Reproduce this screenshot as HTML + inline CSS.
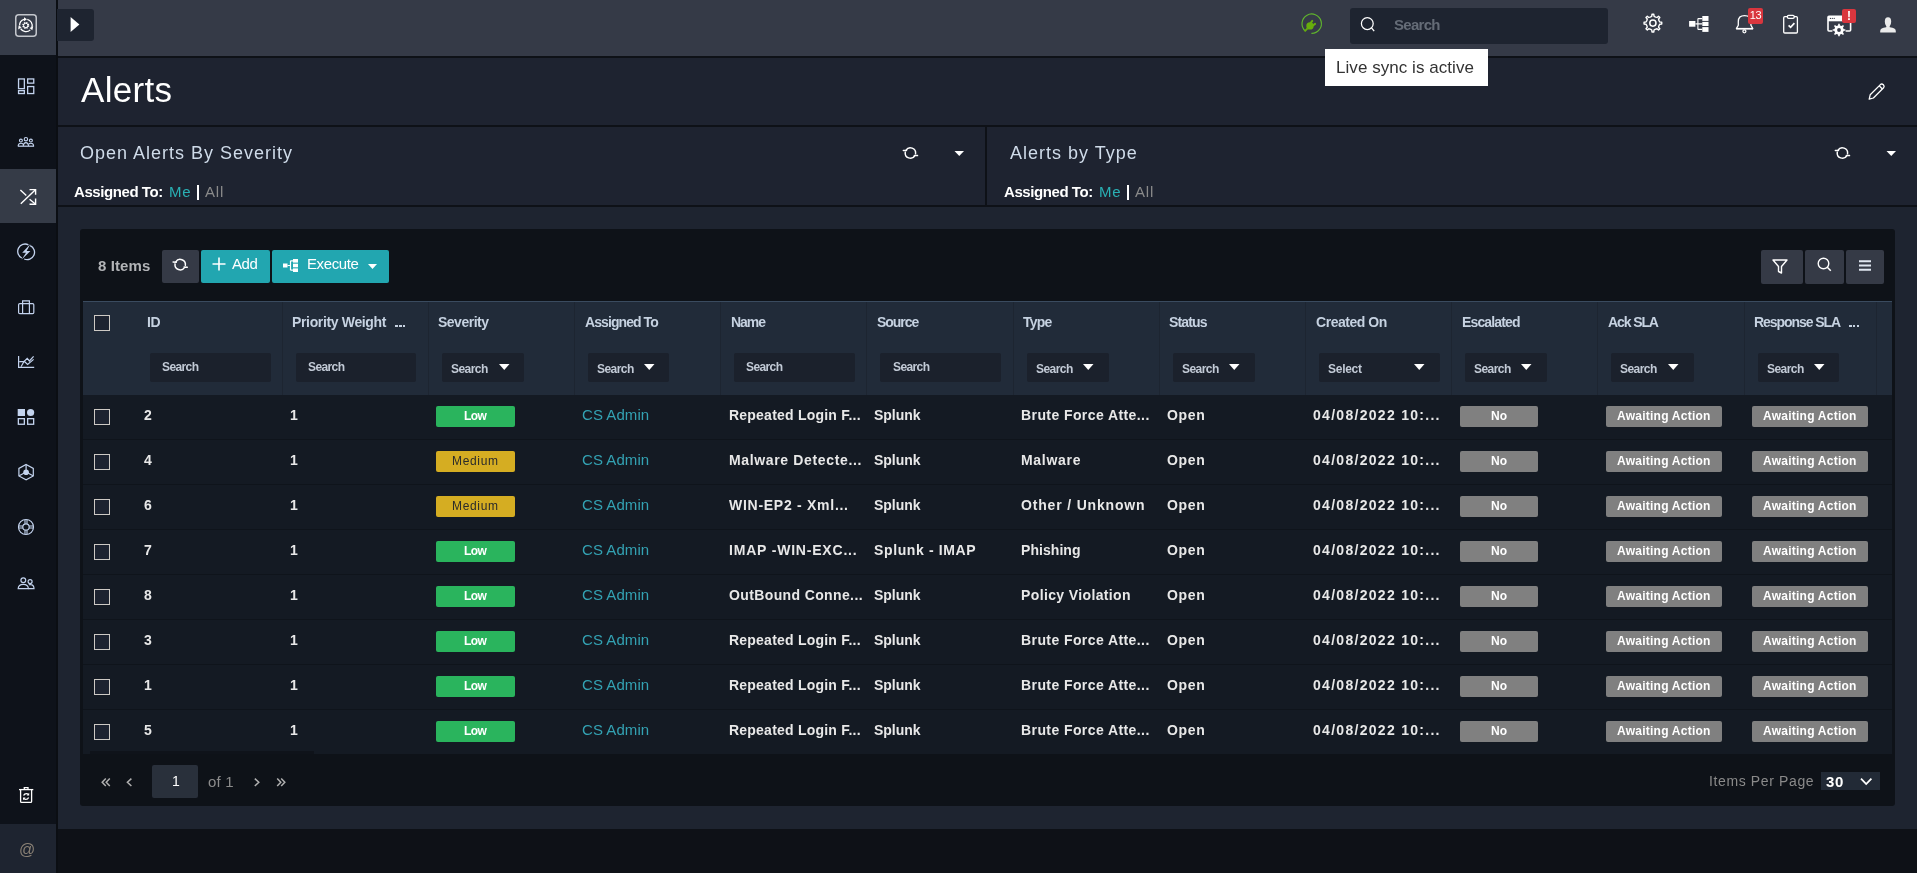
<!DOCTYPE html><html><head><meta charset='utf-8'><style>
*{box-sizing:border-box;margin:0;padding:0}
html,body{width:1917px;height:873px;overflow:hidden;background:#0e1117;font-family:"Liberation Sans", sans-serif;}
.a{position:absolute}
.t{position:absolute;white-space:nowrap;line-height:1;will-change:transform}
svg{position:absolute;overflow:visible}
</style></head><body>
<div class='a' style='left:0;top:0;width:56px;height:873px;background:#0e121a'></div>
<div class='a' style='left:0;top:0;width:56px;height:55px;background:#363c49'></div>
<div class='a' style='left:0;top:169px;width:56px;height:54px;background:#353b47'></div>
<div class='a' style='left:0;top:824px;width:56px;height:49px;background:#1e2430'></div>
<div class='a' style='left:56px;top:0;width:2px;height:873px;background:#0b0e13'></div>
<div class='t' style='left:18.90px;top:842px;font-size:16px;font-weight:400;color:#8a8175;letter-spacing:0.000px;'>@</div>
<div class='a' style='left:58px;top:0;width:1859px;height:56px;background:#353a47'></div>
<div class='a' style='left:58px;top:56px;width:1859px;height:2px;background:#0e1117'></div>
<div class='a' style='left:57px;top:9px;width:37px;height:32px;background:#1e2430;border-radius:0 3px 3px 0'></div>
<div class='a' style='left:1350px;top:8px;width:258px;height:36px;background:#1e2430;border-radius:3px'></div>
<div class='t' style='left:1394.00px;top:17px;font-size:15px;font-weight:700;color:#656c77;letter-spacing:-0.720px;'>Search</div>
<div class='a' style='left:58px;top:58px;width:1859px;height:67px;background:#1e2330'></div>
<div class='t' style='left:81px;top:72px;font-size:35px;color:#fff;letter-spacing:0.3px'>Alerts</div>
<div class='a' style='left:58px;top:125px;width:1859px;height:2px;background:#0e1117'></div>
<div class='a' style='left:58px;top:127px;width:1859px;height:78px;background:#1e2330'></div>
<div class='a' style='left:985px;top:127px;width:2px;height:78px;background:#0e1117'></div>
<div class='a' style='left:58px;top:205px;width:1859px;height:2px;background:#0e1117'></div>
<div class='t' style='left:80px;top:144px;font-size:18px;color:#cfdbe9;letter-spacing:1px'>Open Alerts By Severity</div>
<div class='t' style='left:74.30px;top:184px;font-size:15px;font-weight:700;color:#fff;letter-spacing:-0.425px;'>Assigned To:</div>
<div class='t' style='left:168.90px;top:184px;font-size:15px;font-weight:400;color:#2ab0b4;letter-spacing:0.825px;font-weight:400'>Me</div>
<div class='a' style='left:197.3px;top:185px;width:1.7px;height:15px;background:#fff'></div>
<div class='t' style='left:205.00px;top:184px;font-size:15px;font-weight:400;color:#8a8a8a;letter-spacing:0.787px;'>All</div>
<div class='t' style='left:1010px;top:144px;font-size:18px;color:#cfdbe9;letter-spacing:1px'>Alerts by Type</div>
<div class='t' style='left:1004.30px;top:184px;font-size:15px;font-weight:700;color:#fff;letter-spacing:-0.425px;'>Assigned To:</div>
<div class='t' style='left:1098.90px;top:184px;font-size:15px;font-weight:400;color:#2ab0b4;letter-spacing:0.825px;font-weight:400'>Me</div>
<div class='a' style='left:1127.3px;top:185px;width:1.7px;height:15px;background:#fff'></div>
<div class='t' style='left:1135.00px;top:184px;font-size:15px;font-weight:400;color:#8a8a8a;letter-spacing:0.787px;'>All</div>
<div class='a' style='left:58px;top:207px;width:1859px;height:622px;background:#1e2430'></div>
<div class='a' style='left:80px;top:229px;width:1815px;height:577px;background:#0e1218;border-radius:3px'></div>
<div class='t' style='left:97.50px;top:258px;font-size:15px;font-weight:700;color:#b2b4b7;letter-spacing:0.108px;'>8 Items</div>
<div class='a' style='left:162px;top:250px;width:37px;height:33px;background:#353a46;border-radius:2px'></div>
<div class='a' style='left:201px;top:250px;width:69px;height:33px;background:#22a6b0;border-radius:2px'></div>
<svg style='left:212px;top:257px' width='14' height='14' viewBox='0 0 14 14'><path d='M7 0.5 V13.5 M0.5 7 H13.5' stroke='#fff' stroke-width='1.6'/></svg>
<div class='t' style='left:232.30px;top:256px;font-size:15px;font-weight:400;color:#fff;letter-spacing:-0.425px;'>Add</div>
<div class='a' style='left:272px;top:250px;width:117px;height:33px;background:#22a6b0;border-radius:2px'></div>
<svg style='left:283px;top:259px' width='16' height='13' viewBox='0 0 16 13'><g fill='#fff'>
<rect x='0' y='4.5' width='4.5' height='4'/><rect x='10' y='0' width='5' height='3.6'/><rect x='10' y='4.7' width='5' height='3.6'/><rect x='10' y='9.4' width='5' height='3.6'/></g>
<path d='M4.5 6.5 H7.5 M7.5 1.8 V11.2 M7.5 1.8 H10 M7.5 11.2 H10' stroke='#fff' stroke-width='1.2' fill='none'/></svg>
<div class='t' style='left:306.90px;top:256px;font-size:15px;font-weight:400;color:#fff;letter-spacing:-0.392px;'>Execute</div>
<svg style='left:368px;top:264px' width='9' height='5' viewBox='0 0 9 5'><path d='M0 0 H9 L4.5 5Z' fill='#fff'/></svg>
<div class='a' style='left:1761px;top:250px;width:42px;height:34px;background:#353a46;border-radius:2px'></div>
<div class='a' style='left:1805px;top:250px;width:39px;height:34px;background:#353a46;border-radius:2px'></div>
<div class='a' style='left:1846px;top:250px;width:38px;height:34px;background:#353a46;border-radius:2px'></div>
<svg style='left:1772px;top:259px' width='16' height='15' viewBox='0 0 16 15'><path d='M1 1 H15 L9.5 7.5 V14 L6.5 12.5 V7.5Z' fill='none' stroke='#fff' stroke-width='1.4' stroke-linejoin='round'/></svg>
<svg style='left:1817px;top:257px' width='15' height='15' viewBox='0 0 15 15'><circle cx='6.5' cy='6.5' r='5.3' fill='none' stroke='#fff' stroke-width='1.4'/><path d='M10.3 10.3 L13.8 13.8' stroke='#fff' stroke-width='1.5'/></svg>
<svg style='left:1859px;top:260px' width='12' height='11' viewBox='0 0 12 11'><path d='M0 1.2 H12 M0 5.5 H12 M0 9.8 H12' stroke='#dfe6f0' stroke-width='2'/></svg>
<div class='a' style='left:83px;top:301px;width:1809px;height:94px;background:#212b39;border-top:1px solid #3a4b5f'></div>
<div class='a' style='left:282px;top:302px;width:1px;height:93px;background:#1d2531'></div>
<div class='a' style='left:428px;top:302px;width:1px;height:93px;background:#1d2531'></div>
<div class='a' style='left:574px;top:302px;width:1px;height:93px;background:#1d2531'></div>
<div class='a' style='left:720px;top:302px;width:1px;height:93px;background:#1d2531'></div>
<div class='a' style='left:866px;top:302px;width:1px;height:93px;background:#1d2531'></div>
<div class='a' style='left:1013px;top:302px;width:1px;height:93px;background:#1d2531'></div>
<div class='a' style='left:1159px;top:302px;width:1px;height:93px;background:#1d2531'></div>
<div class='a' style='left:1305px;top:302px;width:1px;height:93px;background:#1d2531'></div>
<div class='a' style='left:1451px;top:302px;width:1px;height:93px;background:#1d2531'></div>
<div class='a' style='left:1597px;top:302px;width:1px;height:93px;background:#1d2531'></div>
<div class='a' style='left:1744px;top:302px;width:1px;height:93px;background:#1d2531'></div>
<div class='a' style='left:1876px;top:302px;width:1px;height:93px;background:#1d2531'></div>
<div class='a' style='left:94px;top:315px;width:16px;height:16px;border:1.5px solid #cdc9c4;background:#1d2330'></div>
<div class='t' style='left:147.20px;top:315px;font-size:14px;font-weight:700;color:#c6d2e1;letter-spacing:-0.500px;'>ID</div>
<div class='a' style='left:150.0px;top:353px;width:120.5px;height:29px;background:#1b212c;border-radius:2px'></div>
<div class='t' style='left:162.20px;top:361px;font-size:12px;font-weight:700;color:#c2cad6;letter-spacing:-0.600px;'>Search</div>
<div class='t' style='left:292.20px;top:315px;font-size:14px;font-weight:700;color:#c6d2e1;letter-spacing:-0.348px;'>Priority Weight</div>
<div class='a' style='left:295.5px;top:353px;width:120.5px;height:29px;background:#1b212c;border-radius:2px'></div>
<div class='t' style='left:307.70px;top:361px;font-size:12px;font-weight:700;color:#c2cad6;letter-spacing:-0.600px;'>Search</div>
<div class='t' style='left:438.40px;top:315px;font-size:14px;font-weight:700;color:#c6d2e1;letter-spacing:-0.500px;'>Severity</div>
<div class='a' style='left:441.7px;top:353px;width:82.7px;height:29px;background:#1b212c;border-radius:2px'></div>
<div class='t' style='left:450.80px;top:363px;font-size:12px;font-weight:700;color:#c2cad6;letter-spacing:-0.560px;'>Search</div>
<svg style='left:498.9px;top:364px' width='10.5' height='6' viewBox='0 0 10.5 6'><path d='M0 0 H10.5 L5.25 6Z' fill='#fff'/></svg>
<div class='t' style='left:584.60px;top:315px;font-size:14px;font-weight:700;color:#c6d2e1;letter-spacing:-0.920px;'>Assigned To</div>
<div class='a' style='left:587.9px;top:353px;width:81.3px;height:29px;background:#1b212c;border-radius:2px'></div>
<div class='t' style='left:597.00px;top:363px;font-size:12px;font-weight:700;color:#c2cad6;letter-spacing:-0.560px;'>Search</div>
<svg style='left:643.7px;top:364px' width='10.5' height='6' viewBox='0 0 10.5 6'><path d='M0 0 H10.5 L5.25 6Z' fill='#fff'/></svg>
<div class='t' style='left:730.80px;top:315px;font-size:14px;font-weight:700;color:#c6d2e1;letter-spacing:-1.042px;'>Name</div>
<div class='a' style='left:734.1px;top:353px;width:120.5px;height:29px;background:#1b212c;border-radius:2px'></div>
<div class='t' style='left:746.30px;top:361px;font-size:12px;font-weight:700;color:#c2cad6;letter-spacing:-0.600px;'>Search</div>
<div class='t' style='left:877.00px;top:315px;font-size:14px;font-weight:700;color:#c6d2e1;letter-spacing:-1.060px;'>Source</div>
<div class='a' style='left:880.3px;top:353px;width:120.5px;height:29px;background:#1b212c;border-radius:2px'></div>
<div class='t' style='left:892.50px;top:361px;font-size:12px;font-weight:700;color:#c2cad6;letter-spacing:-0.600px;'>Search</div>
<div class='t' style='left:1023.20px;top:315px;font-size:14px;font-weight:700;color:#c6d2e1;letter-spacing:-0.742px;'>Type</div>
<div class='a' style='left:1026.5px;top:353px;width:82px;height:29px;background:#1b212c;border-radius:2px'></div>
<div class='t' style='left:1035.60px;top:363px;font-size:12px;font-weight:700;color:#c2cad6;letter-spacing:-0.560px;'>Search</div>
<svg style='left:1083.0px;top:364px' width='10.5' height='6' viewBox='0 0 10.5 6'><path d='M0 0 H10.5 L5.25 6Z' fill='#fff'/></svg>
<div class='t' style='left:1169.40px;top:315px;font-size:14px;font-weight:700;color:#c6d2e1;letter-spacing:-0.850px;'>Status</div>
<div class='a' style='left:1172.7px;top:353px;width:82px;height:29px;background:#1b212c;border-radius:2px'></div>
<div class='t' style='left:1181.80px;top:363px;font-size:12px;font-weight:700;color:#c2cad6;letter-spacing:-0.560px;'>Search</div>
<svg style='left:1229.2px;top:364px' width='10.5' height='6' viewBox='0 0 10.5 6'><path d='M0 0 H10.5 L5.25 6Z' fill='#fff'/></svg>
<div class='t' style='left:1315.60px;top:315px;font-size:14px;font-weight:700;color:#c6d2e1;letter-spacing:-0.456px;'>Created On</div>
<div class='a' style='left:1318.9px;top:353px;width:120.7px;height:29px;background:#1b212c;border-radius:2px'></div>
<div class='t' style='left:1328.00px;top:363px;font-size:12px;font-weight:700;color:#c2cad6;letter-spacing:-0.275px;'>Select</div>
<svg style='left:1414.1px;top:364px' width='10.5' height='6' viewBox='0 0 10.5 6'><path d='M0 0 H10.5 L5.25 6Z' fill='#fff'/></svg>
<div class='t' style='left:1461.80px;top:315px;font-size:14px;font-weight:700;color:#c6d2e1;letter-spacing:-0.847px;'>Escalated</div>
<div class='a' style='left:1465.1px;top:353px;width:81.8px;height:29px;background:#1b212c;border-radius:2px'></div>
<div class='t' style='left:1474.20px;top:363px;font-size:12px;font-weight:700;color:#c2cad6;letter-spacing:-0.560px;'>Search</div>
<svg style='left:1521.4px;top:364px' width='10.5' height='6' viewBox='0 0 10.5 6'><path d='M0 0 H10.5 L5.25 6Z' fill='#fff'/></svg>
<div class='t' style='left:1608.00px;top:315px;font-size:14px;font-weight:700;color:#c6d2e1;letter-spacing:-1.104px;'>Ack SLA</div>
<div class='a' style='left:1611.3px;top:353px;width:82.4px;height:29px;background:#1b212c;border-radius:2px'></div>
<div class='t' style='left:1620.40px;top:363px;font-size:12px;font-weight:700;color:#c2cad6;letter-spacing:-0.560px;'>Search</div>
<svg style='left:1668.2px;top:364px' width='10.5' height='6' viewBox='0 0 10.5 6'><path d='M0 0 H10.5 L5.25 6Z' fill='#fff'/></svg>
<div class='t' style='left:1754.20px;top:315px;font-size:14px;font-weight:700;color:#c6d2e1;letter-spacing:-1.068px;'>Response SLA</div>
<div class='a' style='left:1757.5px;top:353px;width:81.6px;height:29px;background:#1b212c;border-radius:2px'></div>
<div class='t' style='left:1766.60px;top:363px;font-size:12px;font-weight:700;color:#c2cad6;letter-spacing:-0.560px;'>Search</div>
<svg style='left:1813.6px;top:364px' width='10.5' height='6' viewBox='0 0 10.5 6'><path d='M0 0 H10.5 L5.25 6Z' fill='#fff'/></svg>
<div class='a' style='left:395.4px;top:324.5px;width:2.6px;height:2.6px;background:#c6d2e1'></div>
<div class='a' style='left:399.0px;top:324.5px;width:2.6px;height:2.6px;background:#c6d2e1'></div>
<div class='a' style='left:402.6px;top:324.5px;width:2.6px;height:2.6px;background:#c6d2e1'></div>
<div class='a' style='left:1849.3px;top:324.5px;width:2.6px;height:2.6px;background:#c6d2e1'></div>
<div class='a' style='left:1852.9px;top:324.5px;width:2.6px;height:2.6px;background:#c6d2e1'></div>
<div class='a' style='left:1856.5px;top:324.5px;width:2.6px;height:2.6px;background:#c6d2e1'></div>
<div class='a' style='left:83px;top:395px;width:1809px;height:44px;background:#141a23'></div>
<div class='a' style='left:83px;top:439px;width:1809px;height:1px;background:#0f141b'></div>
<div class='a' style='left:94px;top:409px;width:16px;height:16px;border:1.5px solid #cdc9c4;background:#1d2330'></div>
<div class='t' style='left:144.40px;top:408px;font-size:14px;font-weight:700;color:#e8e8e8;letter-spacing:0.000px;'>2</div>
<div class='t' style='left:290.20px;top:408px;font-size:14px;font-weight:700;color:#e8e8e8;letter-spacing:0.000px;'>1</div>
<div class='a' style='left:435.7px;top:406px;width:79.3px;height:21px;background:#2ab45d;border-radius:2px'></div>
<div class='t' style='left:463.60px;top:410px;font-size:12px;font-weight:700;color:#fff;letter-spacing:-0.550px;'>Low</div>
<div class='t' style='left:582.00px;top:407px;font-size:15px;font-weight:400;color:#33a2b3;letter-spacing:0.064px;'>CS Admin</div>
<div class='t' style='left:728.60px;top:408px;font-size:14px;font-weight:700;color:#e8e8e8;letter-spacing:0.221px;'>Repeated Login F...</div>
<div class='t' style='left:874.40px;top:408px;font-size:14px;font-weight:700;color:#e8e8e8;letter-spacing:-0.010px;'>Splunk</div>
<div class='t' style='left:1020.80px;top:408px;font-size:14px;font-weight:700;color:#e8e8e8;letter-spacing:0.413px;'>Brute Force Atte...</div>
<div class='t' style='left:1166.70px;top:408px;font-size:14px;font-weight:700;color:#e8e8e8;letter-spacing:0.683px;'>Open</div>
<div class='t' style='left:1312.90px;top:408px;font-size:14px;font-weight:700;color:#e8e8e8;letter-spacing:1.289px;'>04/08/2022 10:...</div>
<div class='a' style='left:1460px;top:406px;width:78px;height:21px;background:#808080;border-radius:2px'></div>
<div class='t' style='left:1460px;top:410px;width:78px;text-align:center;font-size:12px;color:#fff;font-weight:700'>No</div>
<div class='a' style='left:1605.8px;top:406px;width:116.5px;height:21px;background:#808080;border-radius:2px'></div>
<div class='t' style='left:1617.00px;top:410px;font-size:12px;font-weight:700;color:#fff;letter-spacing:0.243px;'>Awaiting Action</div>
<div class='a' style='left:1751.9px;top:406px;width:116.5px;height:21px;background:#808080;border-radius:2px'></div>
<div class='t' style='left:1763.10px;top:410px;font-size:12px;font-weight:700;color:#fff;letter-spacing:0.243px;'>Awaiting Action</div>
<div class='a' style='left:83px;top:440px;width:1809px;height:44px;background:#141a23'></div>
<div class='a' style='left:83px;top:484px;width:1809px;height:1px;background:#0f141b'></div>
<div class='a' style='left:94px;top:454px;width:16px;height:16px;border:1.5px solid #cdc9c4;background:#1d2330'></div>
<div class='t' style='left:144.40px;top:453px;font-size:14px;font-weight:700;color:#e8e8e8;letter-spacing:0.000px;'>4</div>
<div class='t' style='left:290.20px;top:453px;font-size:14px;font-weight:700;color:#e8e8e8;letter-spacing:0.000px;'>1</div>
<div class='a' style='left:435.7px;top:451px;width:79.3px;height:21px;background:#d5ad22;border-radius:2px'></div>
<div class='t' style='left:451.90px;top:455px;font-size:12px;font-weight:400;color:#2b2b2b;letter-spacing:0.675px;'>Medium</div>
<div class='t' style='left:582.00px;top:452px;font-size:15px;font-weight:400;color:#33a2b3;letter-spacing:0.064px;'>CS Admin</div>
<div class='t' style='left:728.60px;top:453px;font-size:14px;font-weight:700;color:#e8e8e8;letter-spacing:0.649px;'>Malware Detecte...</div>
<div class='t' style='left:874.40px;top:453px;font-size:14px;font-weight:700;color:#e8e8e8;letter-spacing:-0.010px;'>Splunk</div>
<div class='t' style='left:1020.80px;top:453px;font-size:14px;font-weight:700;color:#e8e8e8;letter-spacing:0.708px;'>Malware</div>
<div class='t' style='left:1166.70px;top:453px;font-size:14px;font-weight:700;color:#e8e8e8;letter-spacing:0.683px;'>Open</div>
<div class='t' style='left:1312.90px;top:453px;font-size:14px;font-weight:700;color:#e8e8e8;letter-spacing:1.289px;'>04/08/2022 10:...</div>
<div class='a' style='left:1460px;top:451px;width:78px;height:21px;background:#808080;border-radius:2px'></div>
<div class='t' style='left:1460px;top:455px;width:78px;text-align:center;font-size:12px;color:#fff;font-weight:700'>No</div>
<div class='a' style='left:1605.8px;top:451px;width:116.5px;height:21px;background:#808080;border-radius:2px'></div>
<div class='t' style='left:1617.00px;top:455px;font-size:12px;font-weight:700;color:#fff;letter-spacing:0.243px;'>Awaiting Action</div>
<div class='a' style='left:1751.9px;top:451px;width:116.5px;height:21px;background:#808080;border-radius:2px'></div>
<div class='t' style='left:1763.10px;top:455px;font-size:12px;font-weight:700;color:#fff;letter-spacing:0.243px;'>Awaiting Action</div>
<div class='a' style='left:83px;top:485px;width:1809px;height:44px;background:#141a23'></div>
<div class='a' style='left:83px;top:529px;width:1809px;height:1px;background:#0f141b'></div>
<div class='a' style='left:94px;top:499px;width:16px;height:16px;border:1.5px solid #cdc9c4;background:#1d2330'></div>
<div class='t' style='left:144.40px;top:498px;font-size:14px;font-weight:700;color:#e8e8e8;letter-spacing:0.000px;'>6</div>
<div class='t' style='left:290.20px;top:498px;font-size:14px;font-weight:700;color:#e8e8e8;letter-spacing:0.000px;'>1</div>
<div class='a' style='left:435.7px;top:496px;width:79.3px;height:21px;background:#d5ad22;border-radius:2px'></div>
<div class='t' style='left:451.90px;top:500px;font-size:12px;font-weight:400;color:#2b2b2b;letter-spacing:0.675px;'>Medium</div>
<div class='t' style='left:582.00px;top:497px;font-size:15px;font-weight:400;color:#33a2b3;letter-spacing:0.064px;'>CS Admin</div>
<div class='t' style='left:728.60px;top:498px;font-size:14px;font-weight:700;color:#e8e8e8;letter-spacing:0.725px;'>WIN-EP2 - Xml...</div>
<div class='t' style='left:874.40px;top:498px;font-size:14px;font-weight:700;color:#e8e8e8;letter-spacing:-0.010px;'>Splunk</div>
<div class='t' style='left:1020.80px;top:498px;font-size:14px;font-weight:700;color:#e8e8e8;letter-spacing:0.829px;'>Other / Unknown</div>
<div class='t' style='left:1166.70px;top:498px;font-size:14px;font-weight:700;color:#e8e8e8;letter-spacing:0.683px;'>Open</div>
<div class='t' style='left:1312.90px;top:498px;font-size:14px;font-weight:700;color:#e8e8e8;letter-spacing:1.289px;'>04/08/2022 10:...</div>
<div class='a' style='left:1460px;top:496px;width:78px;height:21px;background:#808080;border-radius:2px'></div>
<div class='t' style='left:1460px;top:500px;width:78px;text-align:center;font-size:12px;color:#fff;font-weight:700'>No</div>
<div class='a' style='left:1605.8px;top:496px;width:116.5px;height:21px;background:#808080;border-radius:2px'></div>
<div class='t' style='left:1617.00px;top:500px;font-size:12px;font-weight:700;color:#fff;letter-spacing:0.243px;'>Awaiting Action</div>
<div class='a' style='left:1751.9px;top:496px;width:116.5px;height:21px;background:#808080;border-radius:2px'></div>
<div class='t' style='left:1763.10px;top:500px;font-size:12px;font-weight:700;color:#fff;letter-spacing:0.243px;'>Awaiting Action</div>
<div class='a' style='left:83px;top:530px;width:1809px;height:44px;background:#141a23'></div>
<div class='a' style='left:83px;top:574px;width:1809px;height:1px;background:#0f141b'></div>
<div class='a' style='left:94px;top:544px;width:16px;height:16px;border:1.5px solid #cdc9c4;background:#1d2330'></div>
<div class='t' style='left:144.40px;top:543px;font-size:14px;font-weight:700;color:#e8e8e8;letter-spacing:0.000px;'>7</div>
<div class='t' style='left:290.20px;top:543px;font-size:14px;font-weight:700;color:#e8e8e8;letter-spacing:0.000px;'>1</div>
<div class='a' style='left:435.7px;top:541px;width:79.3px;height:21px;background:#2ab45d;border-radius:2px'></div>
<div class='t' style='left:463.60px;top:545px;font-size:12px;font-weight:700;color:#fff;letter-spacing:-0.550px;'>Low</div>
<div class='t' style='left:582.00px;top:542px;font-size:15px;font-weight:400;color:#33a2b3;letter-spacing:0.064px;'>CS Admin</div>
<div class='t' style='left:728.60px;top:543px;font-size:14px;font-weight:700;color:#e8e8e8;letter-spacing:0.805px;'>IMAP -WIN-EXC...</div>
<div class='t' style='left:874.40px;top:543px;font-size:14px;font-weight:700;color:#e8e8e8;letter-spacing:0.631px;'>Splunk - IMAP</div>
<div class='t' style='left:1020.80px;top:543px;font-size:14px;font-weight:700;color:#e8e8e8;letter-spacing:0.054px;'>Phishing</div>
<div class='t' style='left:1166.70px;top:543px;font-size:14px;font-weight:700;color:#e8e8e8;letter-spacing:0.683px;'>Open</div>
<div class='t' style='left:1312.90px;top:543px;font-size:14px;font-weight:700;color:#e8e8e8;letter-spacing:1.289px;'>04/08/2022 10:...</div>
<div class='a' style='left:1460px;top:541px;width:78px;height:21px;background:#808080;border-radius:2px'></div>
<div class='t' style='left:1460px;top:545px;width:78px;text-align:center;font-size:12px;color:#fff;font-weight:700'>No</div>
<div class='a' style='left:1605.8px;top:541px;width:116.5px;height:21px;background:#808080;border-radius:2px'></div>
<div class='t' style='left:1617.00px;top:545px;font-size:12px;font-weight:700;color:#fff;letter-spacing:0.243px;'>Awaiting Action</div>
<div class='a' style='left:1751.9px;top:541px;width:116.5px;height:21px;background:#808080;border-radius:2px'></div>
<div class='t' style='left:1763.10px;top:545px;font-size:12px;font-weight:700;color:#fff;letter-spacing:0.243px;'>Awaiting Action</div>
<div class='a' style='left:83px;top:575px;width:1809px;height:44px;background:#141a23'></div>
<div class='a' style='left:83px;top:619px;width:1809px;height:1px;background:#0f141b'></div>
<div class='a' style='left:94px;top:589px;width:16px;height:16px;border:1.5px solid #cdc9c4;background:#1d2330'></div>
<div class='t' style='left:144.40px;top:588px;font-size:14px;font-weight:700;color:#e8e8e8;letter-spacing:0.000px;'>8</div>
<div class='t' style='left:290.20px;top:588px;font-size:14px;font-weight:700;color:#e8e8e8;letter-spacing:0.000px;'>1</div>
<div class='a' style='left:435.7px;top:586px;width:79.3px;height:21px;background:#2ab45d;border-radius:2px'></div>
<div class='t' style='left:463.60px;top:590px;font-size:12px;font-weight:700;color:#fff;letter-spacing:-0.550px;'>Low</div>
<div class='t' style='left:582.00px;top:587px;font-size:15px;font-weight:400;color:#33a2b3;letter-spacing:0.064px;'>CS Admin</div>
<div class='t' style='left:728.60px;top:588px;font-size:14px;font-weight:700;color:#e8e8e8;letter-spacing:0.375px;'>OutBound Conne...</div>
<div class='t' style='left:874.40px;top:588px;font-size:14px;font-weight:700;color:#e8e8e8;letter-spacing:-0.010px;'>Splunk</div>
<div class='t' style='left:1020.80px;top:588px;font-size:14px;font-weight:700;color:#e8e8e8;letter-spacing:0.373px;'>Policy Violation</div>
<div class='t' style='left:1166.70px;top:588px;font-size:14px;font-weight:700;color:#e8e8e8;letter-spacing:0.683px;'>Open</div>
<div class='t' style='left:1312.90px;top:588px;font-size:14px;font-weight:700;color:#e8e8e8;letter-spacing:1.289px;'>04/08/2022 10:...</div>
<div class='a' style='left:1460px;top:586px;width:78px;height:21px;background:#808080;border-radius:2px'></div>
<div class='t' style='left:1460px;top:590px;width:78px;text-align:center;font-size:12px;color:#fff;font-weight:700'>No</div>
<div class='a' style='left:1605.8px;top:586px;width:116.5px;height:21px;background:#808080;border-radius:2px'></div>
<div class='t' style='left:1617.00px;top:590px;font-size:12px;font-weight:700;color:#fff;letter-spacing:0.243px;'>Awaiting Action</div>
<div class='a' style='left:1751.9px;top:586px;width:116.5px;height:21px;background:#808080;border-radius:2px'></div>
<div class='t' style='left:1763.10px;top:590px;font-size:12px;font-weight:700;color:#fff;letter-spacing:0.243px;'>Awaiting Action</div>
<div class='a' style='left:83px;top:620px;width:1809px;height:44px;background:#141a23'></div>
<div class='a' style='left:83px;top:664px;width:1809px;height:1px;background:#0f141b'></div>
<div class='a' style='left:94px;top:634px;width:16px;height:16px;border:1.5px solid #cdc9c4;background:#1d2330'></div>
<div class='t' style='left:144.40px;top:633px;font-size:14px;font-weight:700;color:#e8e8e8;letter-spacing:0.000px;'>3</div>
<div class='t' style='left:290.20px;top:633px;font-size:14px;font-weight:700;color:#e8e8e8;letter-spacing:0.000px;'>1</div>
<div class='a' style='left:435.7px;top:631px;width:79.3px;height:21px;background:#2ab45d;border-radius:2px'></div>
<div class='t' style='left:463.60px;top:635px;font-size:12px;font-weight:700;color:#fff;letter-spacing:-0.550px;'>Low</div>
<div class='t' style='left:582.00px;top:632px;font-size:15px;font-weight:400;color:#33a2b3;letter-spacing:0.064px;'>CS Admin</div>
<div class='t' style='left:728.60px;top:633px;font-size:14px;font-weight:700;color:#e8e8e8;letter-spacing:0.221px;'>Repeated Login F...</div>
<div class='t' style='left:874.40px;top:633px;font-size:14px;font-weight:700;color:#e8e8e8;letter-spacing:-0.010px;'>Splunk</div>
<div class='t' style='left:1020.80px;top:633px;font-size:14px;font-weight:700;color:#e8e8e8;letter-spacing:0.413px;'>Brute Force Atte...</div>
<div class='t' style='left:1166.70px;top:633px;font-size:14px;font-weight:700;color:#e8e8e8;letter-spacing:0.683px;'>Open</div>
<div class='t' style='left:1312.90px;top:633px;font-size:14px;font-weight:700;color:#e8e8e8;letter-spacing:1.289px;'>04/08/2022 10:...</div>
<div class='a' style='left:1460px;top:631px;width:78px;height:21px;background:#808080;border-radius:2px'></div>
<div class='t' style='left:1460px;top:635px;width:78px;text-align:center;font-size:12px;color:#fff;font-weight:700'>No</div>
<div class='a' style='left:1605.8px;top:631px;width:116.5px;height:21px;background:#808080;border-radius:2px'></div>
<div class='t' style='left:1617.00px;top:635px;font-size:12px;font-weight:700;color:#fff;letter-spacing:0.243px;'>Awaiting Action</div>
<div class='a' style='left:1751.9px;top:631px;width:116.5px;height:21px;background:#808080;border-radius:2px'></div>
<div class='t' style='left:1763.10px;top:635px;font-size:12px;font-weight:700;color:#fff;letter-spacing:0.243px;'>Awaiting Action</div>
<div class='a' style='left:83px;top:665px;width:1809px;height:44px;background:#141a23'></div>
<div class='a' style='left:83px;top:709px;width:1809px;height:1px;background:#0f141b'></div>
<div class='a' style='left:94px;top:679px;width:16px;height:16px;border:1.5px solid #cdc9c4;background:#1d2330'></div>
<div class='t' style='left:144.40px;top:678px;font-size:14px;font-weight:700;color:#e8e8e8;letter-spacing:0.000px;'>1</div>
<div class='t' style='left:290.20px;top:678px;font-size:14px;font-weight:700;color:#e8e8e8;letter-spacing:0.000px;'>1</div>
<div class='a' style='left:435.7px;top:676px;width:79.3px;height:21px;background:#2ab45d;border-radius:2px'></div>
<div class='t' style='left:463.60px;top:680px;font-size:12px;font-weight:700;color:#fff;letter-spacing:-0.550px;'>Low</div>
<div class='t' style='left:582.00px;top:677px;font-size:15px;font-weight:400;color:#33a2b3;letter-spacing:0.064px;'>CS Admin</div>
<div class='t' style='left:728.60px;top:678px;font-size:14px;font-weight:700;color:#e8e8e8;letter-spacing:0.221px;'>Repeated Login F...</div>
<div class='t' style='left:874.40px;top:678px;font-size:14px;font-weight:700;color:#e8e8e8;letter-spacing:-0.010px;'>Splunk</div>
<div class='t' style='left:1020.80px;top:678px;font-size:14px;font-weight:700;color:#e8e8e8;letter-spacing:0.413px;'>Brute Force Atte...</div>
<div class='t' style='left:1166.70px;top:678px;font-size:14px;font-weight:700;color:#e8e8e8;letter-spacing:0.683px;'>Open</div>
<div class='t' style='left:1312.90px;top:678px;font-size:14px;font-weight:700;color:#e8e8e8;letter-spacing:1.289px;'>04/08/2022 10:...</div>
<div class='a' style='left:1460px;top:676px;width:78px;height:21px;background:#808080;border-radius:2px'></div>
<div class='t' style='left:1460px;top:680px;width:78px;text-align:center;font-size:12px;color:#fff;font-weight:700'>No</div>
<div class='a' style='left:1605.8px;top:676px;width:116.5px;height:21px;background:#808080;border-radius:2px'></div>
<div class='t' style='left:1617.00px;top:680px;font-size:12px;font-weight:700;color:#fff;letter-spacing:0.243px;'>Awaiting Action</div>
<div class='a' style='left:1751.9px;top:676px;width:116.5px;height:21px;background:#808080;border-radius:2px'></div>
<div class='t' style='left:1763.10px;top:680px;font-size:12px;font-weight:700;color:#fff;letter-spacing:0.243px;'>Awaiting Action</div>
<div class='a' style='left:83px;top:710px;width:1809px;height:44px;background:#141a23'></div>
<div class='a' style='left:94px;top:724px;width:16px;height:16px;border:1.5px solid #cdc9c4;background:#1d2330'></div>
<div class='t' style='left:144.40px;top:723px;font-size:14px;font-weight:700;color:#e8e8e8;letter-spacing:0.000px;'>5</div>
<div class='t' style='left:290.20px;top:723px;font-size:14px;font-weight:700;color:#e8e8e8;letter-spacing:0.000px;'>1</div>
<div class='a' style='left:435.7px;top:721px;width:79.3px;height:21px;background:#2ab45d;border-radius:2px'></div>
<div class='t' style='left:463.60px;top:725px;font-size:12px;font-weight:700;color:#fff;letter-spacing:-0.550px;'>Low</div>
<div class='t' style='left:582.00px;top:722px;font-size:15px;font-weight:400;color:#33a2b3;letter-spacing:0.064px;'>CS Admin</div>
<div class='t' style='left:728.60px;top:723px;font-size:14px;font-weight:700;color:#e8e8e8;letter-spacing:0.221px;'>Repeated Login F...</div>
<div class='t' style='left:874.40px;top:723px;font-size:14px;font-weight:700;color:#e8e8e8;letter-spacing:-0.010px;'>Splunk</div>
<div class='t' style='left:1020.80px;top:723px;font-size:14px;font-weight:700;color:#e8e8e8;letter-spacing:0.413px;'>Brute Force Atte...</div>
<div class='t' style='left:1166.70px;top:723px;font-size:14px;font-weight:700;color:#e8e8e8;letter-spacing:0.683px;'>Open</div>
<div class='t' style='left:1312.90px;top:723px;font-size:14px;font-weight:700;color:#e8e8e8;letter-spacing:1.289px;'>04/08/2022 10:...</div>
<div class='a' style='left:1460px;top:721px;width:78px;height:21px;background:#808080;border-radius:2px'></div>
<div class='t' style='left:1460px;top:725px;width:78px;text-align:center;font-size:12px;color:#fff;font-weight:700'>No</div>
<div class='a' style='left:1605.8px;top:721px;width:116.5px;height:21px;background:#808080;border-radius:2px'></div>
<div class='t' style='left:1617.00px;top:725px;font-size:12px;font-weight:700;color:#fff;letter-spacing:0.243px;'>Awaiting Action</div>
<div class='a' style='left:1751.9px;top:721px;width:116.5px;height:21px;background:#808080;border-radius:2px'></div>
<div class='t' style='left:1763.10px;top:725px;font-size:12px;font-weight:700;color:#fff;letter-spacing:0.243px;'>Awaiting Action</div>
<div class='a' style='left:90px;top:751px;width:224px;height:3px;background:#0f131a'></div>
<div class='a' style='left:151.9px;top:765.2px;width:46.4px;height:33px;background:#29303b;border-radius:2px'></div>
<div class='t' style='left:171.70px;top:774px;font-size:14px;font-weight:400;color:#fff;letter-spacing:0.000px;'>1</div>
<div class='t' style='left:208.20px;top:774px;font-size:15px;font-weight:400;color:#8c8c8c;letter-spacing:0.200px;'>of 1</div>
<div class='t' style='left:1709.40px;top:774px;font-size:14px;font-weight:400;color:#8a8a8a;letter-spacing:0.623px;'>Items Per Page</div>
<div class='a' style='left:1821.4px;top:772.4px;width:59px;height:18px;background:#222a36'></div>
<div class='t' style='left:1825.90px;top:774px;font-size:15px;font-weight:700;color:#fff;letter-spacing:0.675px;'>30</div>
<div class='a' style='left:1325px;top:49px;width:163px;height:37px;background:#fff'></div>
<div class='t' style='left:1335.60px;top:59px;font-size:17px;font-weight:400;color:#333;letter-spacing:0.050px;'>Live sync is active</div>
<svg style='left:0;top:0' width='1917' height='873' viewBox='0 0 1917 873'><rect x='15.75' y='14.75' width='20.5' height='21.5' rx='3' fill='none' stroke='#c3c6cc' stroke-width='1.5'/>
<g fill='none' stroke='#fff' stroke-width='1.3'>
<path d='M27.3 19.3 A6.3 6.3 0 0 1 31.9 27.2'/>
<path d='M30.3 29.9 A6.3 6.3 0 0 1 20.6 28.6'/>
<path d='M19.6 25.6 A6.3 6.3 0 0 1 24.2 19.3'/>
</g>
<path d='M24 17.2 L27 19.2 L24 21.2Z M33.2 26.2 L32.3 30.2 L29.6 28Z M18.2 29.6 L18.6 25.5 L21.6 27.2Z' fill='#fff'/>
<circle cx='25.75' cy='25.4' r='2.6' fill='none' stroke='#fff' stroke-width='1.8' stroke-dasharray='1.3 0.75'/>
<circle cx='25.75' cy='25.4' r='2.2' fill='none' stroke='#fff' stroke-width='1'/>
<g fill='none' stroke='#c3d3ee' stroke-width='1.3'><rect x='18.55' y='78.95' width='5.8' height='9.7'/><rect x='27.65' y='78.95' width='6.1' height='4.2'/><rect x='18.55' y='90.65' width='5.8' height='2.9'/><rect x='27.65' y='86.55' width='6.1' height='7'/></g>
<g fill='none' stroke='#c3d3ee' stroke-width='1.1'><circle cx='25.9' cy='139.2' r='1.7'/><circle cx='20.9' cy='140.6' r='1.45'/><circle cx='30.9' cy='140.6' r='1.45'/>
<path d='M23.2 146 Q23.6 142.6 25.9 142.6 Q28.2 142.6 28.6 146'/><path d='M18.2 146 Q18.4 143.2 20.9 143.2 Q22.4 143.2 23.3 144.3'/><path d='M33.6 146 Q33.4 143.2 30.9 143.2 Q29.4 143.2 28.5 144.3'/><path d='M17.8 146.2 H34.1' stroke-width='1.2'/></g>
<g fill='none' stroke='#fff' stroke-width='1.4'><path d='M20.4 189.9 L26.3 195.4'/><path d='M20.8 203.8 L35.4 189.8'/><path d='M29.6 199.3 L35.3 204'/><path d='M29.5 189.6 H35.6 V194.7'/><path d='M35.6 198.5 V204.3 H29.5'/></g>
<g fill='none' stroke='#c3d3ee' stroke-width='1.3'><path d='M30.2 245.6 A7.3 7.3 0 0 1 24.2 259' /><path d='M21.8 258 A7.3 7.3 0 0 1 28.4 244.8'/></g>
<path d='M30.6 243.8 L22.2 252.8 H26 L21.5 259.8 L30.4 251 H26.6Z' fill='#c3d3ee'/>
<g fill='none' stroke='#c3d3ee' stroke-width='1.2'><rect x='18.6' y='303.6' width='15.2' height='10' rx='1.2'/><path d='M22.6 313.6 V300.8 H29.4 V313.6'/></g>
<g fill='none' stroke='#c3d3ee' stroke-width='1.2'><path d='M18.6 356 V367.4 H34.2'/><path d='M21 366.8 L24.2 361.2 L27.6 364.4 L33.6 359.4'/><path d='M19.2 361.6 H24 L27.2 358.4 L29.4 361 L33.6 356.4'/></g>
<rect x='17.7' y='409' width='7.3' height='7' fill='#c3d3ee'/><circle cx='30.6' cy='412.5' r='3.6' fill='#c3d3ee'/><g fill='none' stroke='#c3d3ee' stroke-width='1.3'><rect x='18.35' y='418.65' width='6' height='5.6'/><rect x='27.65' y='418.65' width='6' height='5.6'/></g>
<g fill='none' stroke='#c3d3ee' stroke-width='1.2'><path d='M26.1 464.5 L33.3 468.4 V476 L26.1 479.8 L18.9 476 V468.4Z'/><path d='M26.1 464.8 V472 M26.1 472 L19.2 475.8 M26.1 472 L33 475.8'/></g><circle cx='26.1' cy='472.3' r='2.8' fill='#c3d3ee'/>
<g fill='none' stroke='#c3d3ee' stroke-width='1.2'><circle cx='26' cy='527' r='7.5'/><circle cx='26' cy='527' r='3.2'/></g><g stroke='#c3d3ee' stroke-width='1.1'><path d='M25 519.8 V523.8 M27 519.8 V523.8 M25 530.2 V534.2 M27 530.2 V534.2 M18.8 526 H22.8 M18.8 528 H22.8 M29.2 526 H33.2 M29.2 528 H33.2'/></g>
<g fill='none' stroke='#c3d3ee' stroke-width='1.2'><circle cx='23.3' cy='580.2' r='2.4'/><circle cx='30.1' cy='581.6' r='2'/><path d='M18.2 588.6 Q18.4 584.4 23.3 584.4 Q28.2 584.4 28.4 588.6 Z'/><path d='M28.8 584.8 Q30 584.4 30.6 584.6 Q34 584.8 34 588.6 H28.6'/></g>
<g fill='none' stroke='#fff' stroke-width='1.3'><path d='M19 789.6 H33.3'/><path d='M24.3 789.4 V787.6 H28 V789.4'/><path d='M20.6 790 V801.4 Q20.6 802.4 21.6 802.4 H30.6 Q31.6 802.4 31.6 801.4 V790'/><path d='M23.6 795.6 Q24.4 793.6 26.4 793.6 Q27.6 793.6 28.4 794.6 M28.6 797.4 Q27.8 799.4 25.8 799.4 Q24.6 799.4 23.8 798.4'/></g><path d='M29.2 792.8 V795.4 H26.6Z M23 800.2 V797.6 H25.6Z' fill='#fff'/>
<path d='M70.6 16.9 L79.4 24.4 L70.6 31.9Z' fill='#fff'/>
<path d='M1305.2 30.9 A9.7 9.7 0 1 1 1311.4 33.4' fill='none' stroke='#5fb32d' stroke-width='1.2'/>
<circle cx='1310' cy='25.9' r='3.7' fill='#67ad0c'/>
<g stroke='#67ad0c' stroke-linecap='round' stroke-width='2'><path d='M1310.9 22.6 L1312.3 20.9'/><path d='M1313.3 25.3 L1315.1 23.9'/></g>
<path d='M1307.6 28.4 L1304.6 31.4' stroke='#67ad0c' stroke-width='1.8'/>
<circle cx='1367.3' cy='23.6' r='5.9' fill='none' stroke='#fff' stroke-width='1.25'/><path d='M1371.5 27.9 L1374.2 31.2' stroke='#fff' stroke-width='1.3'/>
<path d='M1650.70 16.88 L1651.80 16.19 L1651.97 14.25 L1653.83 14.25 L1654.00 16.19 L1655.10 16.88 L1655.74 17.14 L1657.01 17.44 L1658.50 16.18 L1659.82 17.50 L1658.56 18.99 L1658.86 20.26 L1659.12 20.90 L1659.81 22.00 L1661.75 22.17 L1661.75 24.03 L1659.81 24.20 L1659.12 25.30 L1658.86 25.94 L1658.56 27.21 L1659.82 28.70 L1658.50 30.02 L1657.01 28.76 L1655.74 29.06 L1655.10 29.32 L1654.00 30.01 L1653.83 31.95 L1651.97 31.95 L1651.80 30.01 L1650.70 29.32 L1650.06 29.06 L1648.79 28.76 L1647.30 30.02 L1645.98 28.70 L1647.24 27.21 L1646.94 25.94 L1646.68 25.30 L1645.99 24.20 L1644.05 24.03 L1644.05 22.17 L1645.99 22.00 L1646.68 20.90 L1646.94 20.26 L1647.24 18.99 L1645.98 17.50 L1647.30 16.18 L1648.79 17.44 L1650.06 17.14Z' fill='none' stroke='#fff' stroke-width='1.4' stroke-linejoin='round'/><circle cx='1652.9' cy='23.1' r='3.1' fill='none' stroke='#fff' stroke-width='1.5'/>
<g fill='#fff'><rect x='1689.1' y='21' width='6.3' height='5.7'/><rect x='1702.3' y='16' width='6.2' height='4.9'/><rect x='1702.3' y='21.9' width='6.2' height='4.1'/><rect x='1702.3' y='27.1' width='6.2' height='4.8'/></g><path d='M1695.4 23.9 H1702.3 M1697.9 18.6 V29.4 M1697.9 18.6 H1702.3 M1697.9 29.4 H1702.3' stroke='#fff' stroke-width='1.1' fill='none'/>
<g fill='none' stroke='#fff' stroke-width='1.3'><path d='M1736.4 28.6 L1738.3 25.3 V21.4 Q1738.3 15.6 1744.6 15.6 Q1750.9 15.6 1750.9 21.4 V25.3 L1752.8 28.6Z' stroke-linejoin='round'/><path d='M1736.2 28.7 H1753' stroke-width='1.6'/><circle cx='1744.4' cy='31.3' r='1.5'/></g>
<g fill='none' stroke='#fff' stroke-width='1.3'><path d='M1787.2 16.6 H1784.8 Q1783.7 16.6 1783.7 17.7 V32 Q1783.7 33 1784.8 33 H1796.3 Q1797.4 33 1797.4 32 V17.7 Q1797.4 16.6 1796.3 16.6 H1794'/><rect x='1787.4' y='15.3' width='6.8' height='3' rx='1.2'/><path d='M1788.6 25.3 L1790.6 27.3 L1794.4 23.2' stroke-width='1.7'/></g>
<path d='M1832.4 31 H1829 Q1828 31 1828 30 V17.2 Q1828 16.2 1829 16.2 H1849.6 Q1850.6 16.2 1850.6 17.2 V30 Q1850.6 31 1849.6 31 H1845.6' fill='none' stroke='#fff' stroke-width='1.6'/>
<rect x='1828' y='16' width='22.6' height='5.3' fill='#fff'/>
<g fill='#353a47'><circle cx='1830.4' cy='18.4' r='0.6'/><circle cx='1832.3' cy='18.4' r='0.6'/><circle cx='1834.2' cy='18.4' r='0.6'/></g>
<path d='M1843.31 28.39 L1843.83 29.15 L1845.35 29.22 L1845.35 30.78 L1843.83 30.85 L1843.31 31.61 L1843.19 31.91 L1843.01 32.81 L1844.04 33.94 L1842.94 35.04 L1841.81 34.01 L1840.91 34.19 L1840.61 34.31 L1839.85 34.83 L1839.78 36.35 L1838.22 36.35 L1838.15 34.83 L1837.39 34.31 L1837.09 34.19 L1836.19 34.01 L1835.06 35.04 L1833.96 33.94 L1834.99 32.81 L1834.81 31.91 L1834.69 31.61 L1834.17 30.85 L1832.65 30.78 L1832.65 29.22 L1834.17 29.15 L1834.69 28.39 L1834.81 28.09 L1834.99 27.19 L1833.96 26.06 L1835.06 24.96 L1836.19 25.99 L1837.09 25.81 L1837.39 25.69 L1838.15 25.17 L1838.22 23.65 L1839.78 23.65 L1839.85 25.17 L1840.61 25.69 L1840.91 25.81 L1841.81 25.99 L1842.94 24.96 L1844.04 26.06 L1843.01 27.19 L1843.19 28.09Z' fill='#fff'/><circle cx='1839' cy='30' r='1.9' fill='#353a47'/>
<path d='M1888 17.3 Q1891.2 17.3 1891.2 21.6 Q1891.2 25 1889.6 26.6 L1889.8 27.3 Q1895.8 28 1895.8 31 V32.4 H1880.2 V31 Q1880.2 28 1886.2 27.3 L1886.4 26.6 Q1884.8 25 1884.8 21.6 Q1884.8 17.3 1888 17.3Z' fill='#ebebeb'/>
<g fill='none' stroke='#fff' stroke-width='1.3' stroke-linejoin='round'><path d='M1869.2 99.2 L1870.2 94.8 L1880.4 84.6 Q1881.8 83.4 1883.4 84.8 Q1884.8 86.4 1883.6 87.8 L1873.4 98 Z'/><path d='M1879.2 85.8 L1882.4 89'/></g>
<path d='M905.99 150.24 A5.2 5.2 0 0 1 915.55 153.72 M906.50 150.56 L903.30 150.41 M914.81 155.76 A5.2 5.2 0 0 1 905.25 152.28 M914.30 155.44 L917.50 155.59' fill='none' stroke='#fff' stroke-width='1.5' stroke-linecap='round'/>
<path d='M954.5 150.9 H964 L959.25 156.1Z' fill='#fff'/>
<path d='M1837.99 150.24 A5.2 5.2 0 0 1 1847.55 153.72 M1838.50 150.56 L1835.30 150.41 M1846.81 155.76 A5.2 5.2 0 0 1 1837.25 152.28 M1846.30 155.44 L1849.50 155.59' fill='none' stroke='#fff' stroke-width='1.5' stroke-linecap='round'/>
<path d='M1886.5 150.9 H1896 L1891.25 156.1Z' fill='#fff'/>
<path d='M175.79 261.84 A5.2 5.2 0 0 1 185.35 265.32 M176.30 262.16 L173.10 262.01 M184.61 267.36 A5.2 5.2 0 0 1 175.05 263.88 M184.10 267.04 L187.30 267.19' fill='none' stroke='#fff' stroke-width='1.5' stroke-linecap='round'/>
<g fill='none' stroke='#b0b0b0' stroke-width='1.5' stroke-linejoin='miter'><path d='M105.8 778.6 L102.2 782.3 L105.8 786 M109.8 778.6 L106.2 782.3 L109.8 786'/><path d='M131.4 778.6 L127.4 782.3 L131.4 786'/><path d='M254.8 778.6 L258.8 782.3 L254.8 786'/><path d='M277.2 778.6 L280.8 782.3 L277.2 786 M281.2 778.6 L284.8 782.3 L281.2 786'/></g>
<path d='M1861 778.6 L1866.2 784 L1871.4 778.6' fill='none' stroke='#fff' stroke-width='1.8'/></svg>
<div class='a' style='left:1748px;top:8px;width:15px;height:16px;background:#d9363e;border-radius:2px'></div>
<div class='t' style='left:1748px;top:10px;width:15px;text-align:center;font-size:11px;color:#fff;letter-spacing:-0.3px'>13</div>
<div class='a' style='left:1842px;top:9px;width:14px;height:14px;background:#d9363e;border-radius:2px'></div>
<div class='t' style='left:1842px;top:10px;width:14px;text-align:center;font-size:12px;color:#fff;font-weight:700'>!</div>
</body></html>
